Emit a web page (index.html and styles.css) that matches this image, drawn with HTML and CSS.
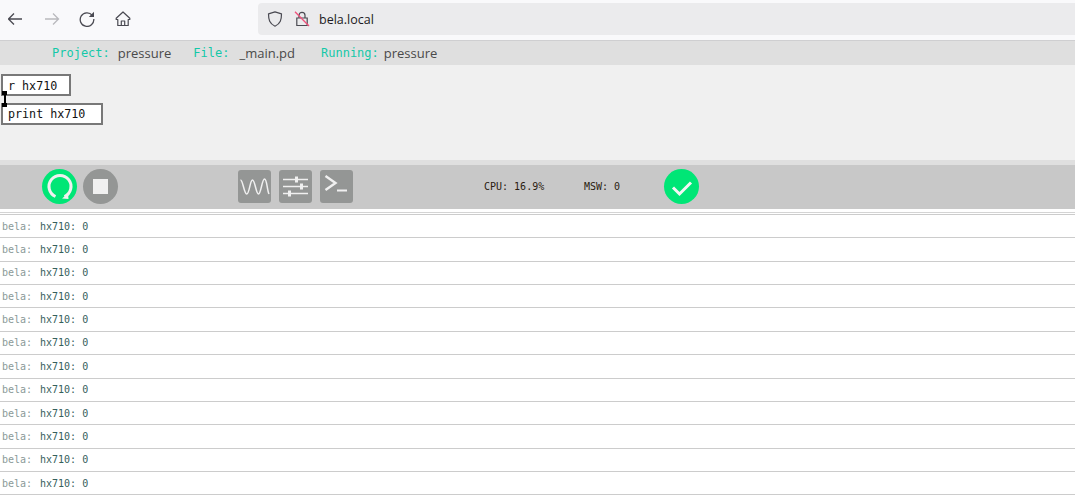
FILE: index.html
```html
<!DOCTYPE html>
<html lang="en">
<head>
<meta charset="utf-8">
<title>bela.local</title>
<link rel="stylesheet" href="styles.css">
</head>
<body>
<header class="browser">
  <nav class="nav">
    <svg class="nav-icon" viewBox="0 0 16 16"><path d="M14 8H.5M6 2.500.5 8 6 13.500" fill="none" stroke="#4a4a52" stroke-width="1.300"/></svg>
    <svg class="nav-icon" viewBox="0 0 16 16"><path d="M1 8h13.500M9 2.500 14.500 8 9 13.500" fill="none" stroke="#b9b9bd" stroke-width="1.300"/></svg>
    <svg class="nav-icon" viewBox="0 0 16 16"><path d="M13.300 4.300A6.800 6.800 0 1 0 14.800 8" fill="none" stroke="#4a4a52" stroke-width="1.300"/><path d="M15 .8V6h-5.200z" fill="#4a4a52"/></svg>
    <svg class="nav-icon" viewBox="0 0 16 16"><path d="M8 1 1.200 7.300v1.200h1.600v6h10.400v-6h1.600V7.300zM6.300 14.500V10h3.400v4.500" fill="none" stroke="#4a4a52" stroke-width="1.200" stroke-linejoin="round"/></svg>
  </nav>
  <div class="url">
    <svg class="url-icon" viewBox="0 0 16 16"><path d="M8 .9 1.500 2.800c0 6 1 10 6.500 12.400 5.500-2.400 6.500-6.400 6.500-12.400z" fill="none" stroke="#4a4a52" stroke-width="1.200" stroke-linejoin="round"/></svg>
    <svg class="url-icon" viewBox="0 0 16 16"><path d="M5 7V4.300a3 3 0 0 1 6 0V7M2.800 7h10.400v7.500H2.800z" fill="none" stroke="#4a4a52" stroke-width="1.200"/><path d="M1 .8 15 15" stroke="#f0507a" stroke-width="1.300"/></svg>
    <span class="url-text">bela.local</span>
  </div>
</header>
<section class="project-bar">
  <span class="label">Project:</span><span class="value v-project">pressure</span>
  <span class="label">File:</span><span class="value v-file">_main.pd</span>
  <span class="label">Running:</span><span class="value v-running">pressure</span>
</section>
<main class="patch">
  <div class="obj obj-r">r hx710</div>
  <div class="wire"></div>
  <div class="obj obj-print">print hx710</div>
</main>
<section class="toolbar">
  <button class="round green"><svg viewBox="0 0 34 34"><path d="M12.500 26.500A11 11 0 1 1 21.500 26.500" fill="none" stroke="#f0f0f0" stroke-width="3"/><path d="M19 28.500 25 23.500 25.500 29z" fill="#f0f0f0"/></svg></button>
  <button class="round gray"><span class="stop"></span></button>
  <div class="tools">
    <button class="tool"><svg viewBox="0 0 33 33"><path d="M2.500 10C5 10 6 24 8.700 24S12 10 14.500 10 18 24 20.500 24 24 9 26.500 9 29 20 31 24" fill="none" stroke="#f0f0f0" stroke-width="1.500"/></svg></button>
    <button class="tool"><svg viewBox="0 0 33 33"><path d="M4 9.500h25M4 16.500h25M4 23.500h25" stroke="#f0f0f0" stroke-width="1.500"/><path d="M16 6.500h3v6h-3zM21 13.500h3v6h-3zM9 20.500h3v6H9z" fill="#f0f0f0"/></svg></button>
    <button class="tool"><svg viewBox="0 0 33 33"><path d="M5.500 6 15.500 13 5.500 20" fill="none" stroke="#f0f0f0" stroke-width="2.400"/><path d="M17 20.500h10" stroke="#f0f0f0" stroke-width="2"/></svg></button>
  </div>
  <div class="stats">
    <span class="stat stat-cpu">CPU: 16.9%</span>
    <span class="stat">MSW: 0</span>
  </div>
  <div class="round green ok"><svg viewBox="0 0 34 34"><path d="M8 17.500 14.500 24 26 12.500" fill="none" stroke="#f5f5f5" stroke-width="3"/></svg></div>
</section>
<section class="console">
  <div class="row"><span class="who">bela:</span><span class="msg">hx710: 0</span></div>
  <div class="row"><span class="who">bela:</span><span class="msg">hx710: 0</span></div>
  <div class="row"><span class="who">bela:</span><span class="msg">hx710: 0</span></div>
  <div class="row"><span class="who">bela:</span><span class="msg">hx710: 0</span></div>
  <div class="row"><span class="who">bela:</span><span class="msg">hx710: 0</span></div>
  <div class="row"><span class="who">bela:</span><span class="msg">hx710: 0</span></div>
  <div class="row"><span class="who">bela:</span><span class="msg">hx710: 0</span></div>
  <div class="row"><span class="who">bela:</span><span class="msg">hx710: 0</span></div>
  <div class="row"><span class="who">bela:</span><span class="msg">hx710: 0</span></div>
  <div class="row"><span class="who">bela:</span><span class="msg">hx710: 0</span></div>
  <div class="row"><span class="who">bela:</span><span class="msg">hx710: 0</span></div>
  <div class="row"><span class="who">bela:</span><span class="msg">hx710: 0</span></div>
</section>
</body>
</html>
```
FILE: styles.css
```css
* { box-sizing: border-box; }
html, body { margin: 0; height: 100%; overflow: hidden; background: #fff; }
button { border: 0; padding: 0; margin: 0; }
svg { display: block; }

.browser {
  height: 41px;
  background: #f9f9fb;
  border-bottom: 1px solid #cfcfd1;
  display: flex;
  align-items: flex-start;
}
.nav { display: flex; gap: 19.500px; padding: 11px 0 0 8px; width: 258px; }
.nav-icon { width: 16px; height: 16px; }
.url {
  margin-top: 3px;
  width: 817px;
  height: 32px;
  background: #ebebed;
  border-radius: 4px 0 0 4px;
  display: flex;
  align-items: center;
  padding-left: 9px;
  gap: 11px;
}
.url-icon { width: 16px; height: 16px; }
.url-text { font: 12.500px/1 "Open Sans", sans-serif; color: #1c1b22; margin-left: -2px; padding-top: 3px; }

.project-bar {
  height: 24px;
  background: #dfdfdf;
  display: flex;
  align-items: center;
  padding-left: 52px;
}
.label { font: 12px "DejaVu Sans Mono", monospace; color: #14c8a8; }
.value { font: 13px "Open Sans", sans-serif; color: #4a4a4a; margin-left: 8px; }
.v-project { margin-right: 22px; }
.v-file { margin-left: 10px; margin-right: 26px; }
.v-running { margin-left: 5px; }

.patch { position: relative; height: 95px; background: #f0f0f0; }
.obj {
  position: absolute;
  left: 1px;
  height: 22px;
  background: #fff;
  border: 2px solid #787878;
  font: 11.700px/19px "DejaVu Sans Mono", monospace;
  color: #111;
  padding-left: 5px;
  white-space: pre;
}
.obj-r { top: 9px; width: 70px; padding-top: 1px; }
.obj-print { top: 38px; width: 102px; }
.wire {
  position: absolute;
  left: 2px;
  top: 26px;
  width: 5px;
  height: 16px;
  z-index: 1;
  background:
    linear-gradient(#000, #000) 0 0 / 5px 4px no-repeat,
    linear-gradient(#000, #000) 0 100% / 5px 4px no-repeat,
    linear-gradient(#000, #000) 1.500px 0 / 2px 100% no-repeat;
}

.toolbar {
  height: 49px;
  background: #c8c8c8;
  border-top: 5px solid #dfdfdf;
  display: flex;
  align-items: center;
  padding: 0 0 1px 42px;
}
.round {
  width: 35px;
  height: 35px;
  border-radius: 50%;
  display: flex;
  align-items: center;
  justify-content: center;
  flex: none;
}
.round svg { width: 34px; height: 34px; }
.green { background: #00e676; }
.gray { background: #949695; margin-left: 6px; }
.stop { width: 15px; height: 15px; background: #f0f0f0; }
.tools { display: flex; gap: 8px; margin-left: 120px; }
.tool { width: 33px; height: 33px; background: #949695; border-radius: 3px; }
.tool svg { width: 33px; height: 33px; }
.stats { display: flex; margin-left: 131px; width: 180px; }
.stat { font: 10px "DejaVu Sans Mono", monospace; color: #2a1c10; }
.stat-cpu { width: 100px; }

.console {
  margin-top: 3px;
  border-top: 1px solid #d4d4d4;
  padding-top: 1px;
  background: #fff;
}
.row {
  height: 23.360px;
  border-bottom: 1px solid #ccc;
  padding-left: 2px;
  display: flex;
  align-items: center;
  font: 10px "DejaVu Sans Mono", monospace;
}
.row:first-child { height: 24.360px; border-top: 1px solid #ccc; }
.who { color: #8a9a98; width: 38px; }
.msg { color: #35605c; }
```
